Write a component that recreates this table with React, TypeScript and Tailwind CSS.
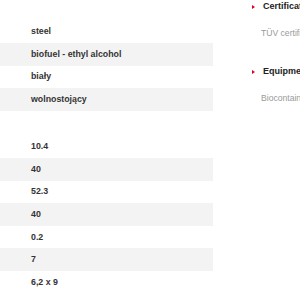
import React from 'react';

const groups: string[][] = [
  ['steel', 'biofuel - ethyl alcohol', 'biały', 'wolnostojący'],
  ['10.4', '40', '52.3', '40', '0.2', '7', '6,2 x 9'],
];

const infoBlocks = [
  { title: 'Certificates', text: 'TÜV certificate' },
  { title: 'Equipment', text: 'Biocontainer' },
];

const SpecRows: React.FC<{ values: string[] }> = ({ values }) => (
  <div>
    {values.map((v, i) => (
      <div
        key={i}
        className={`h-[22.6px] flex items-center pl-[31px] text-[8.8px] font-bold text-[#333] ${i % 2 === 1 ? 'bg-[#f3f3f3]' : 'bg-white'}`}
      >
        {v}
      </div>
    ))}
  </div>
);

export default function App() {
  return (
    <div
      className="w-[300px] h-[300px] overflow-hidden bg-white flex"
      style={{ fontFamily: '"Liberation Sans", Arial, sans-serif' }}
    >
      <div className="w-[213px] shrink-0 pt-[20.5px]">
        <SpecRows values={groups[0]} />
        <div className="h-[24.6px]" />
        <SpecRows values={groups[1]} />
      </div>

      <div className="ml-[39px] whitespace-nowrap">
        {infoBlocks.map((b, i) => (
          <div key={b.title} className={i === 0 ? '' : 'mt-[26px]'}>
            <div className="h-[14px] flex items-center">
              <span className="w-0 h-0 border-y-[2px] border-y-transparent border-l-[3px] border-l-[#e2001a]" />
              <span className="ml-[8px] text-[9px] font-bold text-[#222]">{b.title}</span>
            </div>
            <div className="mt-[13px] h-[12px] leading-[12px] pl-[9px] text-[8.6px] text-[#9a9a9a]">{b.text}</div>
          </div>
        ))}
      </div>
    </div>
  );
}
